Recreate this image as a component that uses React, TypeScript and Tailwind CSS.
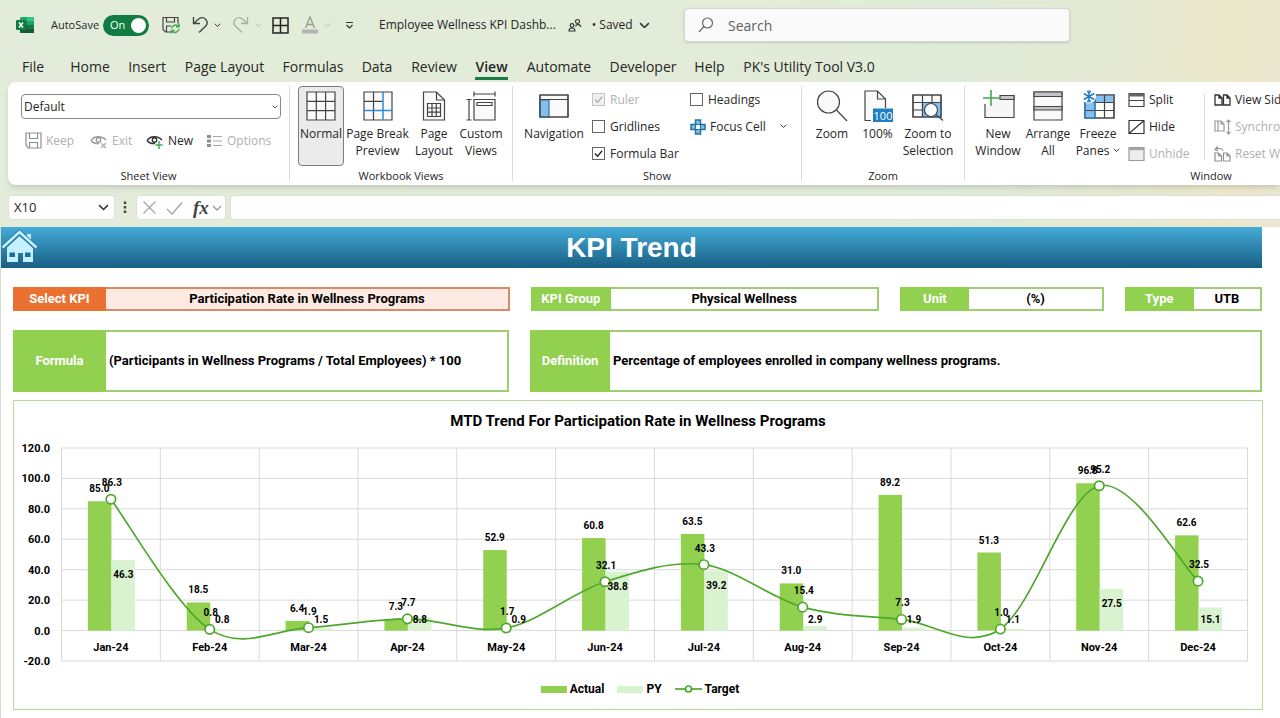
import type { ReactNode } from "react";
import clsx from "clsx";

const INK = "#444444";

function Chevron({ className = "w-2", color = "#333" }: { className?: string; color?: string }) {
  return (
    <svg viewBox="0 0 10 6" className={clsx("shrink-0", className)} fill="none" stroke={color} strokeWidth="1.4">
      <path d="M1 1l4 4 4-4" />
    </svg>
  );
}

function Svg({ w, h, className, children }: { w: number; h: number; className?: string; children: ReactNode }) {
  return (
    <svg width={w} height={h} viewBox={`0 0 ${w} ${h}`} className={clsx("shrink-0", className)} fill="none" stroke={INK} strokeWidth="1.2">
      {children}
    </svg>
  );
}

/* ---------- title bar ---------- */

function TitleBar() {
  return (
    <header className="flex h-[50px] items-center pl-4 text-[12px]">
      <Svg w={18} h={18}>
        <g stroke="none">
          <rect x="4" y="1" width="14" height="16" rx="1.5" fill="#21a366" />
          <path d="M4 5h7v4H4z" fill="#107c41" />
          <path d="M11 1h5.500a1.500 1.500 0 011.500 1.500V5h-7z" fill="#33c481" />
          <path d="M4 9h14v8H5.500A1.500 1.500 0 014 15.500z" fill="#185c37" />
          <path d="M11 9h7v4h-7z" fill="#107c41" />
          <rect x="0" y="4" width="10" height="10" rx="1" fill="#107c41" />
        </g>
        <path d="M3 6.500l4 5M7 6.500l-4 5" stroke="#fff" strokeWidth="1.500" />
      </Svg>
      <label htmlFor="autosave" className="ml-[17px] w-[46px] whitespace-nowrap text-[11px]">AutoSave</label>
      <button id="autosave" role="switch" aria-checked="true" className="ml-[6px] flex h-[21px] w-[46px] items-center justify-between rounded-full bg-[#107c41] pl-[7px] pr-[3px] text-[11px] text-white">
        On
        <span className="size-[15px] rounded-full bg-white" />
      </button>
      <button aria-label="Save" className="ml-[13px]">
        <Svg w={18} h={18}>
          <path d="M9 16H3.500L1 13.500V1.500h15v6M4.500 1.500V6h8V1.500M4.500 16v-6H9" />
          <path d="M9.500 12.500a4 4 0 017-2M17 7.500v3.200h-3M17 13a4 4 0 01-7 2M9.500 17.500v-3h3" stroke="#3fa653" strokeWidth="1.500" />
        </Svg>
      </button>
      <button aria-label="Undo" className="ml-[12px]">
        <Svg w={17} h={18}>
          <path d="M1.500 1v6.500H8M1.500 7.500L7 2.800a5 5 0 017 7L7 16.500" strokeWidth="1.400" />
        </Svg>
      </button>
      <button aria-label="Undo list" className="ml-[5px]"><Chevron className="w-[7px]" /></button>
      <button aria-label="Redo" className="ml-[11px]" disabled>
        <Svg w={17} h={18}>
          <path d="M15.500 1v6.500H9M15.500 7.500L10 2.800a5 5 0 00-7 7l7 6.700" stroke="#a9b0a4" strokeWidth="1.400" />
        </Svg>
      </button>
      <button aria-label="Redo list" className="ml-[6px]" disabled><Chevron className="w-[7px]" color="#b5bbb0" /></button>
      <button aria-label="Borders" className="ml-[10px]">
        <Svg w={17} h={17}>
          <path d="M1 1h15v15H1zM8.500 1v15M1 8.500h15" stroke="#222" strokeWidth="1.500" />
        </Svg>
      </button>
      <button aria-label="Font color" className="ml-[12px]" disabled>
        <Svg w={18} h={18}>
          <path d="M4.500 12L9 1l4.500 11M6 8.500h6" stroke="#9a9f96" strokeWidth="1.400" />
          <path d="M1 15.500h16" stroke="#b4b4b4" strokeWidth="4" />
        </Svg>
      </button>
      <button aria-label="Font color list" className="ml-[5px]" disabled><Chevron className="w-[7px]" color="#b5bbb0" /></button>
      <button aria-label="Customize toolbar" className="ml-[14px]">
        <Svg w={9} h={9}><path d="M1 1.500h7M1.500 4l3 3 3-3" stroke="#333" /></Svg>
      </button>
      <span className="ml-[25px] w-[178px] whitespace-nowrap text-[12px]">Employee Wellness KPI Dashb...</span>
      <Svg w={14} h={14} className="ml-[11px]">
        <circle cx="9.500" cy="3.500" r="2" stroke="#333" />
        <path d="M7.500 8.500c.5-2.500 5-2.500 5.200.5" stroke="#333" />
        <circle cx="4" cy="7.500" r="1.800" stroke="#333" />
        <path d="M1 13c0-4 6-4 6 0z" stroke="#333" />
      </Svg>
      <button className="ml-[7px] flex items-center whitespace-nowrap">
        <span className="w-[10px]">•</span>
        <span className="w-[34px]">Saved</span>
        <Chevron className="ml-[6px] w-[11px]" />
      </button>
      <label className="ml-[34px] flex h-[34px] w-[386px] items-center rounded border border-[#d3d6cf] bg-[#fafafa] pl-[13px] shadow-sm">
        <Svg w={16} h={16}><circle cx="9.500" cy="6" r="5" stroke="#666" /><path d="M6 9.500L1 15" stroke="#666" /></Svg>
        <input type="search" placeholder="Search" aria-label="Search" className="ml-[14px] w-full bg-transparent text-[14px] outline-none placeholder:text-[#616161]" />
      </label>
    </header>
  );
}

const TABS = [
  { name: "File", cls: "w-[42px] mr-[7px]" },
  { name: "Home", cls: "w-[58px]" },
  { name: "Insert", cls: "w-[56px]" },
  { name: "Page Layout", cls: "w-[99px]" },
  { name: "Formulas", cls: "w-[78px]" },
  { name: "Data", cls: "w-[50px]" },
  { name: "Review", cls: "w-[64px]" },
  { name: "View", cls: "w-[51px]" },
  { name: "Automate", cls: "w-[84px]" },
  { name: "Developer", cls: "w-[84px]" },
  { name: "Help", cls: "w-[49px]" },
  { name: "PK's Utility Tool V3.0", cls: "w-[150px]" },
];

function Tabs() {
  return (
    <nav className="flex h-8 items-start pl-3 text-[14px]">
      {TABS.map((t) => (
        <button key={t.name} className={clsx("flex shrink-0 justify-center whitespace-nowrap", t.cls)}>
          <span className={clsx("border-b-[3px] pt-[7px] pb-[1px] leading-[19px]", t.name === "View" ? "border-[#1a7a45] font-semibold" : "border-transparent")}>
            {t.name}
          </span>
        </button>
      ))}
    </nav>
  );
}

/* ---------- ribbon ---------- */

function Group({ label, className, children }: { label: string; className: string; children: ReactNode }) {
  return (
    <section aria-label={label} className={clsx("flex shrink-0 flex-col", className)}>
      <div className="flex h-[86px] items-start">{children}</div>
      <div className="text-center text-[11px] leading-4">{label}</div>
    </section>
  );
}

function Divider() {
  return <div className="my-1 w-px shrink-0 bg-[#dcdcdc]" />;
}

function BigButton({ lines, className, icon, active, menu }: { lines: string[]; className: string; icon: ReactNode; active?: boolean; menu?: boolean }) {
  return (
    <button
      aria-pressed={active}
      className={clsx("flex h-[80px] shrink-0 flex-col items-center rounded border", active ? "border-[#7d7d7d] bg-[#ebebeb]" : "border-transparent", className)}
    >
      <span className="flex h-[38px] items-center">{icon}</span>
      {lines.map((l, i) => (
        <span key={l} className="flex items-center whitespace-nowrap text-[12px] leading-[17px]">
          {l}
          {menu && i === lines.length - 1 && <Chevron className="ml-1 w-[7px]" />}
        </span>
      ))}
    </button>
  );
}

function Check({ label, checked, disabled }: { label: string; checked?: boolean; disabled?: boolean }) {
  return (
    <label className={clsx("flex h-[27px] items-center gap-[5px] whitespace-nowrap", disabled && "text-[#b0b0b0]")}>
      <span className="grid size-[13px] place-items-center">
        <input
          type="checkbox"
          defaultChecked={checked}
          disabled={disabled}
          className="peer col-start-1 row-start-1 size-[13px] appearance-none border border-[#666] bg-white disabled:border-[#c4c4c4] disabled:bg-[#f0f0f0]"
        />
        <svg viewBox="0 0 10 10" className="pointer-events-none col-start-1 row-start-1 hidden size-[9px] peer-checked:block" fill="none" stroke="currentColor" strokeWidth="1.5">
          <path d="M1 5l3 3 5-6" />
        </svg>
      </span>
      {label}
    </label>
  );
}

function SmallButton({ label, icon, disabled, className }: { label: string; icon: ReactNode; disabled?: boolean; className?: string }) {
  return (
    <button disabled={disabled} className={clsx("flex h-[27px] items-center gap-1 whitespace-nowrap", disabled && "text-[#b0b0b0]", className)}>
      {icon}
      {label}
    </button>
  );
}

function Eye({ badge, color, badgeColor }: { badge: string; color: string; badgeColor: string }) {
  return (
    <Svg w={18} h={16}>
      <path d="M1 7.500C4 2.500 12 2.500 16 7M1 7.500C3 10 6 11 9 10.500" stroke={color} strokeWidth="1.400" />
      <circle cx="8.500" cy="7" r="2.200" stroke={color} strokeWidth="1.400" />
      <path d={badge} stroke={badgeColor} strokeWidth="1.400" />
    </Svg>
  );
}

function SheetViewGroup() {
  return (
    <Group label="Sheet View" className="w-[281px]">
      <div className="flex flex-col pl-[13px] pt-3">
        <div className="grid h-[25px] w-[260px] items-center">
          <select aria-label="Sheet view" className="col-start-1 row-start-1 h-full w-full appearance-none rounded border border-[#8a8a8a] bg-white pl-[2px] text-[12px]">
            <option>Default</option>
          </select>
          <Chevron className="pointer-events-none col-start-1 row-start-1 mr-[3px] w-[6px] justify-self-end" />
        </div>
        <div className="mt-2 flex pl-1">
          <SmallButton className="w-[65px]" label="Keep" disabled icon={<Svg w={17} h={17}><path d="M1 1h15v15H3.500L1 13.500zM4.500 1v5.500h8V1M4.500 16v-5.500h8V16" stroke="#8f8f8f" /></Svg>} />
          <SmallButton className="w-[56px]" label="Exit" disabled icon={<Eye badge="M11 10l5 5M16 10l-5 5" color="#9a9a9a" badgeColor="#b0b0b0" />} />
          <SmallButton className="w-[60px]" label="New" icon={<Eye badge="M13 8v8M9.500 12h7" color="#333" badgeColor="#3fa653" />} />
          <SmallButton label="Options" disabled icon={<Svg w={17} h={14}><path d="M1 2.500h4M1 7h4M1 11.500h4" stroke="#8f8f8f" strokeWidth="3" /><path d="M7 2.500h9M7 7h9M7 11.500h9" stroke="#a5a5a5" /></Svg>} />
        </div>
      </div>
    </Group>
  );
}

function WorkbookViewsGroup() {
  return (
    <Group label="Workbook Views" className="w-[222px] pl-2 pr-2">
      <div className="flex gap-px pt-1">
        <BigButton active lines={["Normal"]} className="w-[46px]" icon={<Svg w={30} h={30}><path d="M1 1h28v28H1z" fill="#fafafa" /><path d="M10.300 1v28M19.600 1v28M1 10.300h28M1 19.600h28" /></Svg>} />
        <BigButton
          lines={["Page Break", "Preview"]}
          className="w-[65px]"
          icon={
            <Svg w={30} h={30}>
              <path d="M1 1h28v28H1z" fill="#fafafa" />
              <path d="M10.500 1v18M1 10.300h18.500M10.500 20v9" />
              <path d="M20 1v28M1 19.600h28" stroke="#2a8dd4" strokeWidth="1.500" />
            </Svg>
          }
        />
        <BigButton
          lines={["Page", "Layout"]}
          className="w-[46px]"
          icon={
            <Svg w={24} h={30}>
              <path d="M1.500 1h13l8 8v20h-21z" fill="#fafafa" />
              <path d="M14.500 1v8h8M5.500 12.500h13v13h-13zM10 12.500v13M14.300 12.500v13M5.500 17h13M5.500 21.200h13" />
            </Svg>
          }
        />
        <BigButton
          lines={["Custom", "Views"]}
          className="w-[46px]"
          icon={
            <Svg w={30} h={30}>
              <path d="M8 8.500h21v20.500H8z" fill="#fafafa" />
              <path d="M11 11.500h15v3H11zM8 3h21M8 .5v5M29 .5v5M3 8.500V29M.5 8.500h5M.5 29h5" />
            </Svg>
          }
        />
      </div>
    </Group>
  );
}

function ShowGroup() {
  return (
    <Group label="Show" className="w-[288px]">
      <div className="flex pl-2 pt-1">
        <BigButton
          lines={["Navigation"]}
          className="w-[66px]"
          icon={
            <Svg w={30} h={24}>
              <path d="M1 1h28v22H1z" fill="#fafafa" />
              <path d="M1 6h9v17H1z" fill="#83c0f0" stroke="#2f6fa8" />
              <path d="M1 1h28v22H1zM1 5.500h28" />
            </Svg>
          }
        />
        <div className="ml-[5px] w-[98px] text-[12px]">
          <Check label="Ruler" checked disabled />
          <Check label="Gridlines" />
          <Check label="Formula Bar" checked />
        </div>
        <div className="text-[12px]">
          <Check label="Headings" />
          <button className="flex h-[27px] items-center whitespace-nowrap">
            <Svg w={16} h={16} className="mr-1">
              <path d="M5.500 1h5v4.500H15v5h-4.500V15h-5v-4.500H1v-5h4.500z" fill="#7fc0ea" stroke="#24739f" strokeWidth="1.500" />
              <path d="M5.500 5.500h5v5h-5z" fill="#fff" stroke="#24739f" />
            </Svg>
            Focus Cell
            <Chevron className="ml-[14px] w-[7px]" />
          </button>
        </div>
      </div>
    </Group>
  );
}

function ZoomGroup() {
  return (
    <Group label="Zoom" className="w-[162px]">
      <div className="flex pl-[6px] pt-1">
        <BigButton lines={["Zoom"]} className="w-[48px]" icon={<Svg w={32} h={32}><circle cx="12.500" cy="12" r="11" fill="#fafafa" /><path d="M20.500 20L31 31" /></Svg>} />
        <BigButton
          lines={["100%"]}
          className="w-[43px]"
          icon={
            <Svg w={30} h={32}>
              <path d="M8 30.500H2V1h12.500l8 8v9" fill="#fafafa" />
              <path d="M14.500 1v8h8" />
              <path d="M10 18.500h20v13.500H10z" fill="#1f7fc4" stroke="none" />
              <text x="20" y="29.500" textAnchor="middle" fontSize="11" fill="#fff" stroke="none">100</text>
            </Svg>
          }
        />
        <BigButton
          lines={["Zoom to", "Selection"]}
          className="w-[58px]"
          icon={
            <Svg w={32} h={30}>
              <path d="M1 4h28v22H1z" fill="#fafafa" />
              <path d="M10.500 11.500H29V26H10.500z" fill="#83c0f0" stroke="#2a8dd4" />
              <path d="M1 4h28v22H1zM10.500 4v22M20 4v8M1 11.500h28M1 19h10" />
              <circle cx="19" cy="19" r="6.500" fill="#fff" />
              <path d="M24 23.500L31 29.500" />
            </Svg>
          }
        />
      </div>
    </Group>
  );
}

function Pages({ color }: { color: string }) {
  return (
    <Svg w={17} h={14}>
      <path d="M1 2h4l3 3v7H1zM5 2v3h3M9.500 2h3.500l3 3v7H9.500zM13 2v3h3" stroke={color} strokeWidth="1.300" />
    </Svg>
  );
}

function WindowGroup() {
  return (
    <Group label="Window" className="w-[492px]">
      <div className="flex pl-2 pt-1">
        <BigButton
          lines={["New", "Window"]}
          className="w-[50px]"
          icon={
            <Svg w={33} h={32}>
              <path d="M3 14v13.500h29V5.500H18" fill="#f7f7f7" />
              <path d="M18 5.500h14v4H18z" fill="#c8c8c8" />
              <path d="M9 0v16M1 8h16" stroke="#3fa653" strokeWidth="1.600" />
            </Svg>
          }
        />
        <BigButton
          lines={["Arrange", "All"]}
          className="w-[50px]"
          icon={
            <Svg w={30} h={30}>
              <path d="M1 1h28v28H1z" fill="#fafafa" />
              <path d="M1 1h28v4.500H1zM1 15.500h28v3.500H1z" fill="#c4c4c4" />
            </Svg>
          }
        />
        <BigButton
          menu
          lines={["Freeze", "Panes"]}
          className="w-[50px]"
          icon={
            <Svg w={33} h={32}>
              <path d="M3 5h29v23H3z" fill="#fff" />
              <path d="M3 5h29v7.500H3zM3 12h10v16H3z" fill="#83c0f0" stroke="none" />
              <path d="M3 5h29v23H3zM13 5v23M22.500 5v23M3 12.500h29M3 20.500h29" />
              <path d="M3 12.500h10V28H3z" stroke="#2a8dd4" />
              <circle cx="7" cy="6.500" r="7" fill="#fff" stroke="none" />
              <path d="M7 .5v12M1.800 3.500l10.400 6M12.200 3.500l-10.400 6" stroke="#1f7fc4" strokeWidth="1.500" />
              <path d="M5 1l2 2 2-2M5 12l2-2 2 2" stroke="#1f7fc4" />
            </Svg>
          }
        />
        <div className="ml-[5px] w-[76px] text-[12px]">
          <SmallButton label="Split" icon={<Svg w={17} h={16}><path d="M1 1.500h15v13H1zM1 8.500h15" /><path d="M1 3h15" strokeWidth="3" stroke="#666" /></Svg>} />
          <SmallButton label="Hide" icon={<Svg w={17} h={16}><path d="M1 1.500h15v13H1zM1 14.500l15-13" stroke="#333" /></Svg>} />
          <SmallButton label="Unhide" disabled icon={<Svg w={17} h={16}><path d="M1 1.500h15v13H1z" fill="#eee" stroke="#999" /><path d="M1 3h15" strokeWidth="2.500" stroke="#a5a5a5" /></Svg>} />
        </div>
        <div className="mt-2 h-[66px] w-px bg-[#dcdcdc]" />
        <div className="ml-[9px] text-[12px]">
          <SmallButton label="View Side by Side" icon={<Pages color="#333" />} />
          <SmallButton
            label="Synchronous Scrolling"
            disabled
            icon={<Svg w={17} h={16}><path d="M1 2v10h9V5L7 2zM4 2v10M7 2v3h3M14.500 1v14M12.500 3l2-2 2 2M12.500 13l2 2 2-2" stroke="#999" /></Svg>}
          />
          <SmallButton label="Reset Window Position" disabled icon={<Svg w={17} h={16}><path d="M1 7h3.500l3 3v5H1zM4.500 7v3h3M9.500 7h3.500l3 3v5H9.500zM13 7v3h3M1 3.500c3-2 7-1 8 1M3.500.5L1 3.500l3 1.500" stroke="#8f8f8f" /></Svg>} />
        </div>
      </div>
    </Group>
  );
}

function FormulaBar() {
  return (
    <div className="flex h-8 items-start pl-2 text-[13px]">
      <div className="flex h-[25px] w-[107px] items-center rounded border border-[#dde3d6] bg-white pl-[5px] pr-[5px]">
        <input aria-label="Name box" defaultValue="X10" className="w-full min-w-0 text-[13px] outline-none" />
        <Chevron className="w-[11px]" />
      </div>
      <Svg w={4} h={25} className="ml-[8px]"><path d="M2 6.500v2.500M2 11v2.500M2 15.500v2.500" strokeWidth="2.500" /></Svg>
      <div className="ml-[9px] flex h-[25px] w-[90px] items-center rounded border border-[#dde3d6] bg-white pl-[5px]">
        <button aria-label="Cancel"><Svg w={15} h={15}><path d="M1.500 1.500l12 12M13.500 1.500l-12 12" stroke="#a5a5a5" /></Svg></button>
        <button aria-label="Enter" className="ml-[9px]"><Svg w={17} h={14}><path d="M1 8l5 5L16 1.500" stroke="#a5a5a5" strokeWidth="1.400" /></Svg></button>
        <button aria-label="Insert function" className="ml-[10px] font-['Liberation_Serif',serif] text-[19px] font-bold italic leading-[20px] text-[#444]">fx</button>
        <Chevron className="ml-[3px] w-[10px]" color="#999" />
      </div>
      <input aria-label="Formula" className="ml-1 h-[25px] grow rounded-l border border-r-0 border-[#dde3d6] bg-white px-2 outline-none" />
    </div>
  );
}

/* ---------- worksheet ---------- */

function Field({ label, value, labelClass, orange, left }: { label: string; value: string; labelClass: string; orange?: boolean; left?: boolean }) {
  return (
    <div className={clsx("flex border-2", orange ? "border-[#d98a62] bg-[#fdeae2]" : "border-[#9fce72] bg-white")}>
      <div className={clsx("-my-0.5 -ml-0.5 flex shrink-0 items-center justify-center text-white", orange ? "bg-[#e97132]" : "bg-[#92d050]", labelClass)}>{label}</div>
      <div className={clsx("flex grow items-center whitespace-nowrap", left ? "pl-[3px]" : "justify-center")}>{value}</div>
    </div>
  );
}

const MONTHS = ["Jan", "Feb", "Mar", "Apr", "May", "Jun", "Jul", "Aug", "Sep", "Oct", "Nov", "Dec"];
const ACTUAL = [85.0, 18.5, 6.4, 7.3, 52.9, 60.8, 63.5, 31.0, 89.2, 51.3, 96.8, 62.6];
const PY = [46.3, 0.8, 1.5, 8.8, 0.9, 38.8, 39.2, 2.9, 1.9, 1.1, 27.5, 15.1];
const TARGET = [86.3, 0.8, 1.9, 7.7, 1.7, 32.1, 43.3, 15.4, 7.3, 1.0, 95.2, 32.5];
const TICKS = [120, 100, 80, 60, 40, 20, 0, -20];

const LEFT = 47.5;
const STEP = 98.83;
const TOP = 8;
const BAR = 23.5;
const yOf = (v: number) => TOP + ((120 - v) * 213) / 140;
const xOf = (i: number) => LEFT + STEP * (i + 0.5);

function smoothPath(values: number[]) {
  const p = values.map((v, i) => [xOf(i), yOf(v)]);
  let d = `M${p[0][0]} ${p[0][1]}`;
  for (let i = 0; i < p.length - 1; i++) {
    const a = p[Math.max(i - 1, 0)];
    const b = p[i];
    const c = p[i + 1];
    const e = p[Math.min(i + 2, p.length - 1)];
    d += ` C${b[0] + (c[0] - a[0]) / 6} ${b[1] + (c[1] - a[1]) / 6} ${c[0] - (e[0] - b[0]) / 6} ${c[1] - (e[1] - b[1]) / 6} ${c[0]} ${c[1]}`;
  }
  return d;
}

function TrendChart() {
  const zero = yOf(0);
  return (
    <figure className="mt-2 border border-[#b7d99a] pb-[10px]">
      <figcaption className="pt-[11px] pb-[9px] text-center text-[15px] leading-[19px]">MTD Trend For Participation Rate in Wellness Programs</figcaption>
      <svg viewBox="0 0 1248 228" className="block w-full" fontSize="10" fontWeight="bold">
        <g stroke="#d9d9d9">
          {TICKS.map((t) => <path key={t} d={`M${LEFT} ${yOf(t)}H${LEFT + STEP * 12}`} />)}
          {[...Array(13).keys()].map((i) => <path key={i} d={`M${LEFT + STEP * i} ${TOP}V${yOf(-20)}`} />)}
        </g>
        <g fontSize="11" textAnchor="end">
          {TICKS.map((t) => <text key={t} x="36" y={yOf(t) + 4}>{t.toFixed(1)}</text>)}
        </g>
        {MONTHS.map((m, i) => (
          <g key={m}>
            <rect x={xOf(i) - BAR + 0.5} y={yOf(ACTUAL[i])} width={BAR} height={zero - yOf(ACTUAL[i])} fill="#92d050" />
            <rect x={xOf(i) + 0.5} y={yOf(PY[i])} width={BAR} height={zero - yOf(PY[i])} fill="#d9f2d0" />
            <text x={xOf(i)} y={zero + 20} textAnchor="middle" fontSize="11">{m}-24</text>
          </g>
        ))}
        <path d={smoothPath(TARGET)} fill="none" stroke="#4ea72e" strokeWidth="1.7" />
        {TARGET.map((v, i) => <circle key={i} cx={xOf(i)} cy={yOf(v)} r="4.7" fill="#fff" stroke="#4ea72e" strokeWidth="1.7" />)}
        <g textAnchor="middle">
          {MONTHS.map((m, i) => (
            <g key={m}>
              <text x={xOf(i) - 11.5} y={yOf(ACTUAL[i]) - 9}>{ACTUAL[i].toFixed(1)}</text>
              <text x={xOf(i) + 12.5} y={Math.min(yOf(PY[i]) + 18, zero - 8)}>{PY[i].toFixed(1)}</text>
              <text x={xOf(i) + 1} y={yOf(TARGET[i]) - 13}>{TARGET[i].toFixed(1)}</text>
            </g>
          ))}
        </g>
      </svg>
      <ul className="mt-[11px] flex justify-center gap-[13px] pl-1 text-[12px] leading-5">
        <li className="flex items-center gap-[3px]"><span className="h-[7px] w-[26px] bg-[#92d050]" />Actual</li>
        <li className="flex items-center gap-[3px]"><span className="h-[7px] w-[26px] bg-[#d9f2d0]" />PY</li>
        <li className="flex items-center gap-[3px]">
          <svg width="27" height="10" fill="#fff" stroke="#4ea72e" strokeWidth="1.7"><path d="M0 5h27" /><circle cx="13.5" cy="5" r="3" /></svg>
          Target
        </li>
      </ul>
    </figure>
  );
}

function Worksheet() {
  return (
    <main className="border-l border-[#d5dcd0] bg-white pb-2 font-['Roboto',sans-serif] text-[13px] font-bold text-black">
      <div className="mr-[18px] flex h-[41px] items-center bg-linear-to-b from-[#45acd9] to-[#185f84]">
        <a href="#home" aria-label="Home">
          <svg width="37" height="37" viewBox="0 0 37 37" fill="#c5f1ff">
            <path d="M26 5h4v8l-4-4zM6 18.500L18.500 7 32 18.500V33H22V24h-5v9H6z" />
            <path d="M1.500 19L18.500 3.500 35.500 19" fill="none" stroke="#237fa9" strokeWidth="5" />
            <path d="M1.500 18.500L18.500 3 35.500 18.500" fill="none" stroke="#c5f1ff" strokeWidth="2.600" />
            <path d="M8.500 23.500h5.500v4.500H8.500zM24 23.500h5.500v4.500H24z" fill="#1d6f96" />
          </svg>
        </a>
        <h1 className="grow pr-[37px] text-center font-['Liberation_Sans',sans-serif] text-[28px] font-bold leading-[41px] text-white">KPI Trend</h1>
      </div>
      <div className="pl-3 pr-[17px]">
        <div className="mt-[19px] grid h-[23px] grid-cols-[496fr_348fr_203fr_137fr] gap-[21px] pr-px">
          <Field orange label="Select KPI" value="Participation Rate in Wellness Programs" labelClass="w-[93px]" />
          <Field label="KPI Group" value="Physical Wellness" labelClass="w-[80px]" />
          <Field label="Unit" value="(%)" labelClass="w-[69px]" />
          <Field label="Type" value="UTB" labelClass="w-[69px]" />
        </div>
        <div className="mt-5 grid h-[62px] grid-cols-[496fr_732fr] gap-[21px] pr-px">
          <Field left label="Formula" value="(Participants in Wellness Programs / Total Employees) * 100" labelClass="w-[93px]" />
          <Field left label="Definition" value="Percentage of employees enrolled in company wellness programs." labelClass="w-[80px]" />
        </div>
        <TrendChart />
      </div>
    </main>
  );
}

export default function App() {
  return (
    <div className="w-full overflow-x-hidden bg-[linear-gradient(95deg,#e3ecda_0%,#e2ecd8_55%,#e0ebd9_72%,#e5e9d3_84%,#ebe8cb_92%,#eae6d6_100%)] font-['Open_Sans',sans-serif] text-[#262626]">
      <TitleBar />
      <Tabs />
      <div className="ml-2 flex h-[103px] overflow-hidden rounded-l-lg bg-white text-[12px] shadow-md">
        <SheetViewGroup />
        <Divider />
        <WorkbookViewsGroup />
        <Divider />
        <ShowGroup />
        <Divider />
        <ZoomGroup />
        <Divider />
        <WindowGroup />
      </div>
      <div className="pt-[10px]">
        <FormulaBar />
      </div>
      <Worksheet />
    </div>
  );
}
